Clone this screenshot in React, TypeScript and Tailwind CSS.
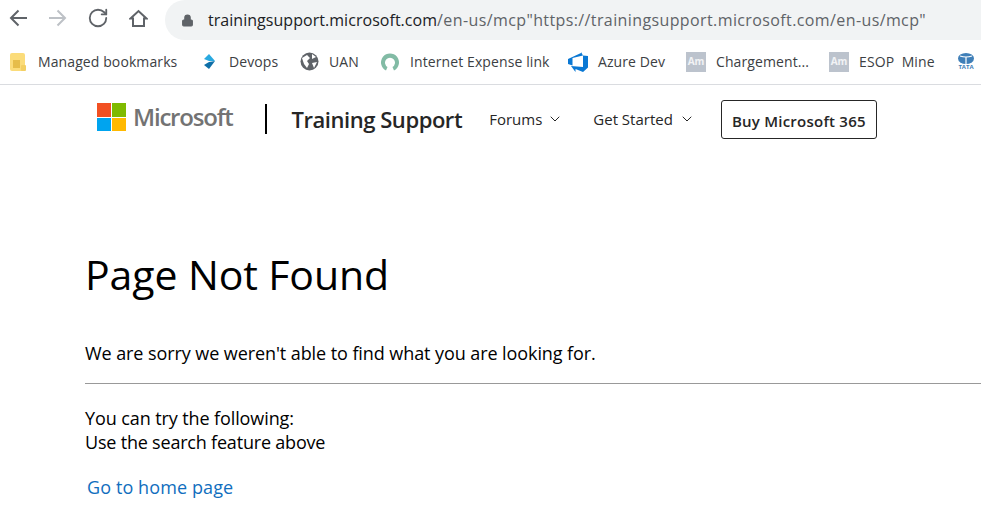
import { RotateCw, Lock, ChevronDown } from 'lucide-react'

const font = "font-['Open_Sans','Noto_Sans',sans-serif]"

function BackIcon() {
  return (
    <svg width="18" height="18" viewBox="0 0 18 18" fill="none" stroke="currentColor" strokeWidth="2">
      <path d="M18 9 H2 M9.5 1.5 L2 9 L9.5 16.5" />
    </svg>
  )
}

function ForwardIcon() {
  return (
    <svg width="18" height="18" viewBox="0 0 18 18" fill="none" stroke="currentColor" strokeWidth="2" className="ml-[22px] text-[#bdc1c6]">
      <path d="M0 9 H16 M8.5 1.5 L16 9 L8.5 16.5" />
    </svg>
  )
}

function HomeIcon() {
  return (
    <svg width="19" height="19" viewBox="0 0 19 19" fill="none" stroke="currentColor" strokeWidth="2" className="ml-[20px]">
      <path d="M1.5 9.5 L9.5 2 L17.5 9.5 H15 V17 H4 V9.5 Z" />
    </svg>
  )
}

function Folder() {
  return (
    <svg width="16" height="18" viewBox="0 0 16 18">
      <rect x="0" y="0" width="15" height="18" rx="2" fill="#fbdc7a" />
      <rect x="3" y="7" width="7" height="8" fill="#e6bd4a" />
      <rect x="11" y="12" width="5" height="6" rx="1" fill="#f3cf63" />
    </svg>
  )
}

function DevopsIcon() {
  return (
    <svg width="12" height="16" viewBox="0 0 12 16">
      <path d="M1 5 L6 0 L12 7 L6 7 Z" fill="#29a9e0" />
      <path d="M12 7 L6 15 L1 11 L6 8 Z" fill="#0f6fa8" />
    </svg>
  )
}

function GlobeIcon() {
  return (
    <svg width="19" height="19" viewBox="0 0 19 19">
      <circle cx="9.5" cy="9.5" r="9" fill="#5f6368" />
      <path d="M2 6 L7 3 L10 6 L7 9 L9 12 L7 16 L4 12 Z" fill="#fff" />
      <path d="M12 2 L16 5 L12 7 Z M12 11 L17 10 L14 16 Z" fill="#fff" />
    </svg>
  )
}

function RingIcon() {
  return (
    <svg width="20" height="20" viewBox="0 0 20 20">
      <path d="M6 18.5 A9 9 0 1 1 14 18.5 L12.5 15 A5 5 0 1 0 7.5 15 Z" fill="#82bba5" />
    </svg>
  )
}

function AzureIcon() {
  return (
    <svg width="20" height="20" viewBox="0 0 20 20">
      <path d="M20 4 V15.5 L15 20 L7.5 17 V20 L3 14 L15 15 V3.5 Z M0 7 L13 1 L13 0 L15 3.5 L4.5 6 V13.5 L0 12 Z" fill="#0a78d4" />
    </svg>
  )
}

function AmIcon() {
  return (
    <div className="flex h-5 w-5 items-center justify-center bg-[#bcc3cd] text-[10px] font-bold text-white/80">Am</div>
  )
}

function TataIcon() {
  return (
    <div className="flex w-5 flex-col items-center">
      <svg width="16" height="11" viewBox="0 0 16 11">
        <ellipse cx="8" cy="5.5" rx="8" ry="5.5" fill="#3f7fb8" />
        <path d="M2 3 Q8 5 14 3 M8 4 V11" stroke="#fff" strokeWidth="1.2" fill="none" />
      </svg>
      <span className="text-[6px] font-bold leading-[7px] text-[#3f7fb8]">TATA</span>
    </div>
  )
}

function MicrosoftLogo() {
  return (
    <div className="grid h-[28px] w-[29px] grid-cols-2 gap-[1px]">
      <div className="bg-[#f25022]" />
      <div className="bg-[#7fba00]" />
      <div className="bg-[#00a4ef]" />
      <div className="bg-[#ffb900]" />
    </div>
  )
}

const bookmarks = [
  { label: 'Managed bookmarks', icon: <Folder />, width: 'w-[141px]' },
  { label: 'Devops', icon: <DevopsIcon />, width: 'w-[50px]' },
  { label: 'UAN', icon: <GlobeIcon />, width: 'w-[31px]' },
  { label: 'Internet Expense link', icon: <RingIcon />, width: 'w-[138px]' },
  { label: 'Azure Dev', icon: <AzureIcon />, width: 'w-[68px]' },
  { label: 'Chargement...', icon: <AmIcon />, width: 'w-[93px]' },
  { label: 'ESOP  Mine', icon: <AmIcon />, width: 'w-[77px]' },
]

export default function App() {
  return (
    <div className={`h-[521px] w-[981px] overflow-hidden bg-white ${font}`}>
      {/* browser toolbar */}
      <div className="flex h-10 items-center">
        <div className="flex w-[165px] items-center pb-[4px] pl-[9px] text-[#5f6368]">
          <BackIcon />
          <ForwardIcon />
          <RotateCw size={22} strokeWidth={2} className="ml-[20px]" />
          <HomeIcon />
        </div>
        <div className="flex h-10 flex-1 items-center rounded-l-[20px] bg-[#f1f3f4] pl-[16px]">
          <Lock size={13} fill="#5f6368" strokeWidth={2} className="text-[#5f6368]" />
          <span className="ml-[14px] whitespace-nowrap text-[16px] tracking-[0.04px] text-[#202124]">
            trainingsupport.microsoft.com
            <span className="tracking-[0.39px] text-[#5f6368]">/en-us/mcp"https://trainingsupport.microsoft.com/en-us/mcp"</span>
          </span>
        </div>
      </div>

      {/* bookmarks bar */}
      <div className="flex h-[45px] items-center gap-5 overflow-hidden border-b border-[#dadce0] pb-[1px] pl-[8px]">
        {bookmarks.map((b) => (
          <div key={b.label} className="flex shrink-0 items-center">
            <div className="flex w-5 justify-center">{b.icon}</div>
            <span className={`ml-[10px] whitespace-pre text-[14px] tracking-[0.1px] text-[#3c4043] ${b.width}`}>{b.label}</span>
          </div>
        ))}
        <TataIcon />
      </div>

      {/* site header */}
      <div className="flex h-[68px] items-center pl-[97px]">
        <div className="mb-[4px] flex items-center">
          <MicrosoftLogo />
          <span className="ml-[7px] text-[24px] font-semibold tracking-[-1.2px] text-[#737373]">Microsoft</span>
        </div>
        <div className="ml-[33px] h-[30px] w-[2px] bg-black" />
        <span className="ml-[24px] text-[22px] font-semibold tracking-[-0.45px] text-[#262626]">Training Support</span>
        <span className="ml-[27px] text-[15px] text-[#262626]">Forums</span>
        <ChevronDown size={16} strokeWidth={1.5} className="ml-[5px] text-[#262626]" />
        <span className="ml-[30px] text-[15px] text-[#262626]">Get Started</span>
        <ChevronDown size={16} strokeWidth={1.5} className="ml-[6px] text-[#262626]" />
        <div className="ml-[26px] flex h-[39px] w-[156px] items-center justify-center rounded-[3px] border border-[#262626] pt-[4px] text-[15px] font-semibold tracking-[0.24px] text-[#262626]">
          Buy Microsoft 365
        </div>
      </div>

      {/* page body */}
      <div className="pl-[85px]">
        <h1 className="mt-[91px] text-[41px] leading-[60px] tracking-[-0.1px] text-black">Page Not Found</h1>
        <p className="mt-[37px] text-[18px] leading-[24px] tracking-[-0.08px] text-black">
          We are sorry we weren't able to find what you are looking for.
        </p>
        <div className="mt-[18px] h-px bg-[#999]" />
        <p className="mt-[22px] text-[18px] leading-[24px] tracking-[-0.1px] text-black">You can try the following:</p>
        <p className="text-[18px] leading-[25px] tracking-[-0.2px] text-black">Use the search feature above</p>
        <p className="ml-[2px] mt-[20px] text-[18px] leading-[25px] tracking-[0.1px] text-[#106ebe]">Go to home page</p>
      </div>
    </div>
  )
}
